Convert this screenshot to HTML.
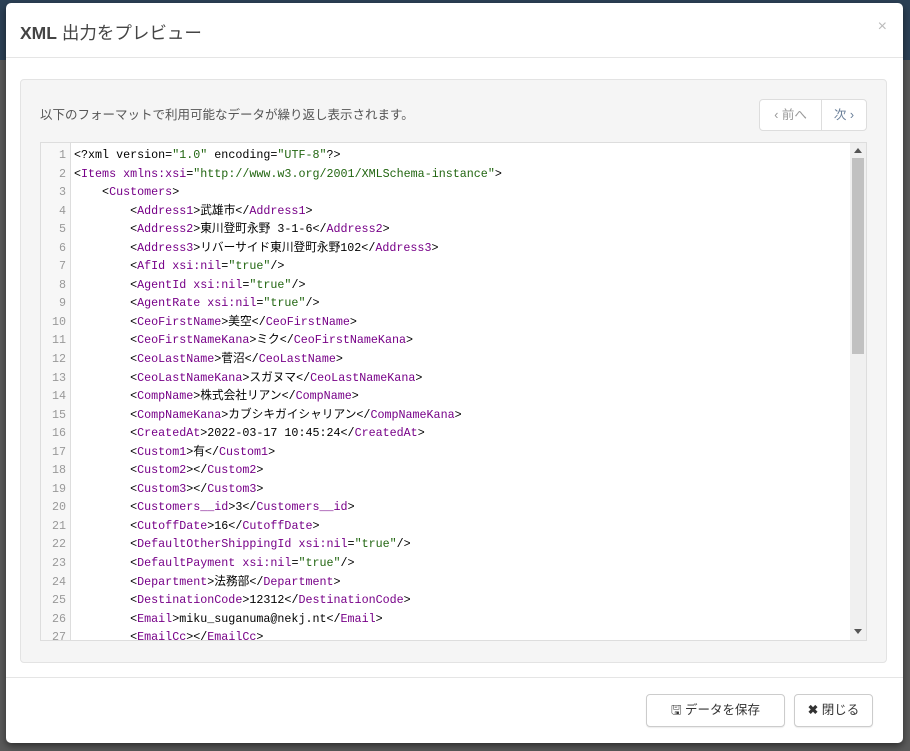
<!DOCTYPE html>
<html><head><meta charset="utf-8"><style>
body{margin:0;width:910px;height:751px;background:#5a5a5a;position:relative;overflow:hidden;font-family:"Liberation Sans","Noto Sans CJK JP",sans-serif;}
.topbar{position:absolute;left:0;top:0;width:910px;height:60px;background:#2c4156;}
.modal{position:absolute;left:6px;top:3px;width:897px;height:740px;background:#fff;border-radius:5px;box-shadow:0 3px 8px rgba(0,0,0,.5);}
.hdr{height:54px;border-bottom:1px solid #e5e5e5;}
.hdr h4{margin:0;position:absolute;left:14px;top:17px;font-size:17.5px;font-weight:normal;color:#444;}
.hdr h4 b{font-weight:bold;}
.x{position:absolute;right:16px;top:15px;color:#bbb;font-size:16px;}
.well{position:absolute;left:14px;top:76px;width:865px;height:582px;background:#f5f5f5;border:1px solid #e3e3e3;border-radius:4px;}
.msg{position:absolute;left:19px;top:24px;font-size:12.5px;color:#555;}
.pg{position:absolute;right:19px;top:19px;height:30px;display:flex;border:1px solid #ddd;border-radius:4px;background:#fff;font-size:12.5px;}
.pg span{padding:0 12px;line-height:30px;color:#999;}
.pg span:first-child{padding:0 14px;}
.pg span+span{border-left:1px solid #ddd;color:#6a7f99;}
.code{position:absolute;left:19px;top:62px;width:825px;height:497px;background:#fff;border:1px solid #ddd;overflow:hidden;}
.gut{position:absolute;left:0;top:0;width:29px;height:100%;background:#f7f7f7;border-right:1px solid #ddd;}
.lines{position:absolute;left:0;top:3px;font-family:"Liberation Mono","Noto Sans CJK JP",monospace;font-size:11.7px;line-height:18.54px;white-space:pre;color:#000;}
.ln{display:inline-block;width:25px;text-align:right;color:#999;margin-right:8px;}
.t{color:#708;}.s{color:#261;}
.sb{position:absolute;right:0;top:0;width:16px;height:100%;background:#f0f0f0;}
.th{position:absolute;left:2px;top:15px;width:12px;height:196px;background:#c1c1c1;}
.ua{position:absolute;left:4px;top:5px;border:4px solid transparent;border-bottom:5px solid #555;border-top:0;}
.da{position:absolute;left:4px;bottom:6px;border:4px solid transparent;border-top:5px solid #555;border-bottom:0;}
.ftr{position:absolute;left:0;top:674px;width:897px;border-top:1px solid #e5e5e5;}
.btn{position:absolute;top:691px;height:31px;border:1px solid #ccc;border-radius:4px;background:#fff;font-size:12.5px;color:#333;line-height:31px;text-align:center;box-shadow:0 1px 1px rgba(0,0,0,.08);}
</style></head><body>
<div class="topbar"></div>
<div class="modal">
<div class="hdr"><h4><b>XML</b> 出力をプレビュー</h4><span class="x">×</span></div>
<div class="well">
<div class="msg">以下のフォーマットで利用可能なデータが繰り返し表示されます。</div>
<div class="pg"><span>‹ 前へ</span><span>次 ›</span></div>
<div class="code"><div class="gut"></div>
<div class="lines"><span class="ln">1</span>&lt;?xml version=<span class="s">"1.0"</span> encoding=<span class="s">"UTF-8"</span>?&gt;
<span class="ln">2</span>&lt;<span class="t">Items xmlns:xsi</span>=<span class="s">"http://www.w3.org/2001/XMLSchema-instance"</span>&gt;
<span class="ln">3</span>    &lt;<span class="t">Customers</span>&gt;
<span class="ln">4</span>        &lt;<span class="t">Address1</span>&gt;武雄市&lt;/<span class="t">Address1</span>&gt;
<span class="ln">5</span>        &lt;<span class="t">Address2</span>&gt;東川登町永野 3-1-6&lt;/<span class="t">Address2</span>&gt;
<span class="ln">6</span>        &lt;<span class="t">Address3</span>&gt;リバーサイド東川登町永野102&lt;/<span class="t">Address3</span>&gt;
<span class="ln">7</span>        &lt;<span class="t">AfId xsi:nil</span>=<span class="s">"true"</span>/&gt;
<span class="ln">8</span>        &lt;<span class="t">AgentId xsi:nil</span>=<span class="s">"true"</span>/&gt;
<span class="ln">9</span>        &lt;<span class="t">AgentRate xsi:nil</span>=<span class="s">"true"</span>/&gt;
<span class="ln">10</span>        &lt;<span class="t">CeoFirstName</span>&gt;美空&lt;/<span class="t">CeoFirstName</span>&gt;
<span class="ln">11</span>        &lt;<span class="t">CeoFirstNameKana</span>&gt;ミク&lt;/<span class="t">CeoFirstNameKana</span>&gt;
<span class="ln">12</span>        &lt;<span class="t">CeoLastName</span>&gt;菅沼&lt;/<span class="t">CeoLastName</span>&gt;
<span class="ln">13</span>        &lt;<span class="t">CeoLastNameKana</span>&gt;スガヌマ&lt;/<span class="t">CeoLastNameKana</span>&gt;
<span class="ln">14</span>        &lt;<span class="t">CompName</span>&gt;株式会社リアン&lt;/<span class="t">CompName</span>&gt;
<span class="ln">15</span>        &lt;<span class="t">CompNameKana</span>&gt;カブシキガイシャリアン&lt;/<span class="t">CompNameKana</span>&gt;
<span class="ln">16</span>        &lt;<span class="t">CreatedAt</span>&gt;2022-03-17 10:45:24&lt;/<span class="t">CreatedAt</span>&gt;
<span class="ln">17</span>        &lt;<span class="t">Custom1</span>&gt;有&lt;/<span class="t">Custom1</span>&gt;
<span class="ln">18</span>        &lt;<span class="t">Custom2</span>&gt;&lt;/<span class="t">Custom2</span>&gt;
<span class="ln">19</span>        &lt;<span class="t">Custom3</span>&gt;&lt;/<span class="t">Custom3</span>&gt;
<span class="ln">20</span>        &lt;<span class="t">Customers__id</span>&gt;3&lt;/<span class="t">Customers__id</span>&gt;
<span class="ln">21</span>        &lt;<span class="t">CutoffDate</span>&gt;16&lt;/<span class="t">CutoffDate</span>&gt;
<span class="ln">22</span>        &lt;<span class="t">DefaultOtherShippingId xsi:nil</span>=<span class="s">"true"</span>/&gt;
<span class="ln">23</span>        &lt;<span class="t">DefaultPayment xsi:nil</span>=<span class="s">"true"</span>/&gt;
<span class="ln">24</span>        &lt;<span class="t">Department</span>&gt;法務部&lt;/<span class="t">Department</span>&gt;
<span class="ln">25</span>        &lt;<span class="t">DestinationCode</span>&gt;12312&lt;/<span class="t">DestinationCode</span>&gt;
<span class="ln">26</span>        &lt;<span class="t">Email</span>&gt;miku_suganuma@nekj.nt&lt;/<span class="t">Email</span>&gt;
<span class="ln">27</span>        &lt;<span class="t">EmailCc</span>&gt;&lt;/<span class="t">EmailCc</span>&gt;</div>
<div class="sb"><div class="ua"></div><div class="th"></div><div class="da"></div></div>
</div>
</div>
<div class="ftr"></div>
<div class="btn" style="left:640px;width:137px;">🖫 データを保存</div>
<div class="btn" style="left:788px;width:77px;"><b>✖</b> 閉じる</div>
</div>
</body></html>
